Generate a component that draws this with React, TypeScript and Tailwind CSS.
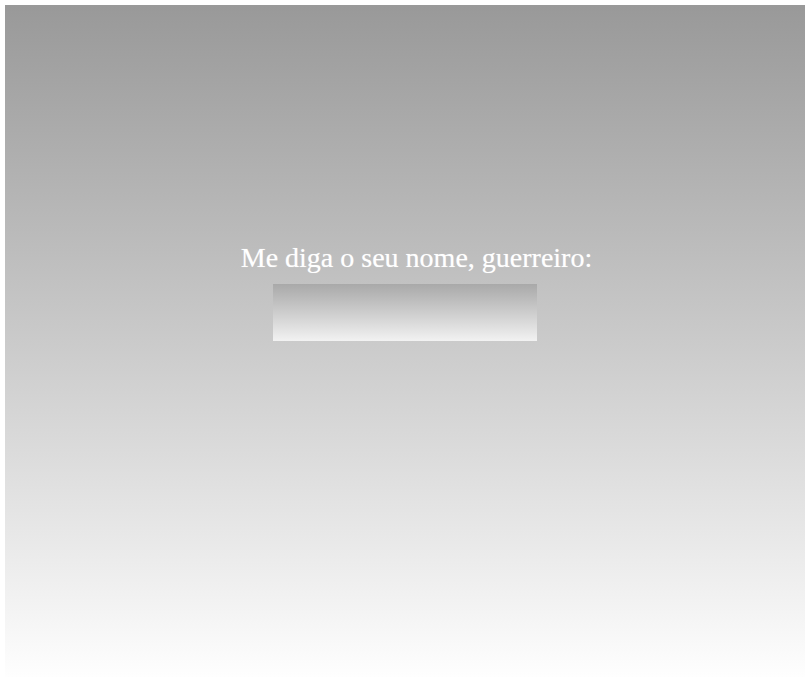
export default function App() {
  return (
    <div className="h-[682px] w-[810px] bg-white p-[5px]">
      <div className="flex h-full w-full flex-col items-center bg-gradient-to-b from-[#999999] to-[#fefefe] pt-[235px]">
        <label
          className="pl-[23px] text-[28px] leading-[36px] text-white [text-shadow:0_0_1px_rgba(255,255,255,0.5)]"
          style={{ fontFamily: '"Liberation Serif", serif' }}
        >
          Me diga o seu nome, guerreiro:
        </label>
        <input
          type="text"
          className="mt-[8px] h-[57px] w-[264px] bg-gradient-to-b from-[#a9a9a9] to-[#f2f2f2] outline-none"
        />
      </div>
    </div>
  );
}
